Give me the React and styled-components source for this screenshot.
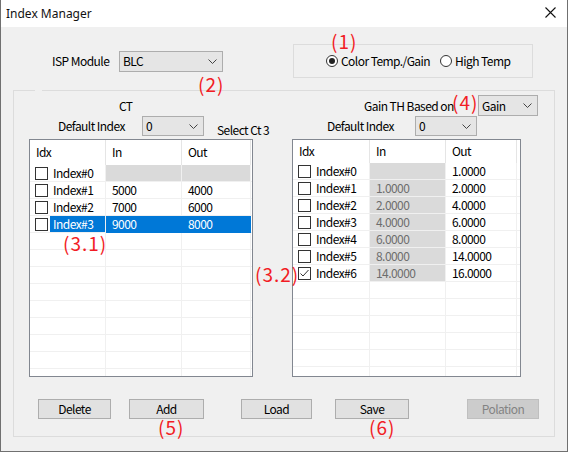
import React from "react";
import styled, { createGlobalStyle } from "styled-components";

const Global = createGlobalStyle`
  html, body { margin: 0; padding: 0; background: #ffffff; }
  * { box-sizing: border-box; }
`;

const UI_FONT = `"Noto Sans CJK TC", "Noto Sans", sans-serif`;

const Window = styled.div`
  position: relative;
  width: 568px;
  height: 452px;
  border: 1px solid #707070;
  border-top: none;
  background: #f0f0f0;
  display: flex;
  flex-direction: column;
  font-family: ${UI_FONT};
  font-size: 12px;
  letter-spacing: -0.55px;
  color: #000;
`;

const TitleBar = styled.div`
  height: 27px;
  flex: none;
  background: #fff;
  display: flex;
  align-items: center;
  padding-left: 5px;
`;

const Title = styled.span`
  font-family: "Noto Sans", sans-serif;
  font-size: 12px;
  letter-spacing: 0;
  color: #111;
  margin-top: -1px;
`;

const CloseIcon = styled.svg`
  margin-left: auto;
  margin-right: 11px;
  margin-top: -3px;
`;

const Body = styled.div`
  flex: 1;
  display: flex;
  flex-direction: column;
`;

const TopRow = styled.div`
  display: flex;
  align-items: center;
  height: 34px;
  margin-top: 17px;
  padding-left: 51px;
`;

const FieldLabel = styled.span`
  width: ${(p) => p.$w}px;
  margin-left: ${(p) => p.$ml || 0}px;
  flex: none;
  white-space: nowrap;
  line-height: 14px;
`;

const ComboBox = styled.div`
  width: ${(p) => p.$w}px;
  height: ${(p) => p.$h}px;
  margin-left: ${(p) => p.$ml || 0}px;
  flex: none;
  background: #e5e5e5;
  border: 1px solid #adadad;
  display: flex;
  align-items: center;
  padding: 0 5px 0 3px;
  line-height: 14px;
`;

const ComboText = styled.span`
  flex: 1;
`;

const Chevron = () => (
  <svg width="9" height="5" viewBox="0 0 9 5">
    <polyline points="0.5,0.5 4.5,4.5 8.5,0.5" fill="none" stroke="#444" strokeWidth="1" />
  </svg>
);

const Combo = ({ value, w, h, ml }) => (
  <ComboBox $w={w} $h={h} $ml={ml}>
    <ComboText>{value}</ComboText>
    <Chevron />
  </ComboBox>
);

const RadioGroup = styled.div`
  margin-left: 70px;
  width: 240px;
  height: 34px;
  border: 1px solid #dcdcdc;
  display: flex;
  align-items: center;
  padding-left: 32px;
  gap: 10px;
`;

const RadioOption = styled.label`
  display: flex;
  align-items: center;
  gap: 3px;
  line-height: 14px;
`;

const RadioCircle = styled.span`
  width: 12px;
  height: 12px;
  border-radius: 50%;
  border: 1px solid #333;
  background: #fff;
  display: flex;
  align-items: center;
  justify-content: center;
  &::after {
    content: "";
    width: 6px;
    height: 6px;
    border-radius: 50%;
    background: ${(p) => (p.$on ? "#222" : "transparent")};
  }
`;

const Group = styled.fieldset`
  margin: 12px 0 0 12px;
  width: 542px;
  height: 347px;
  min-width: 0;
  border: 1px solid #dcdcdc;
  padding: 4px 0 0 15px;
`;

const GroupLegend = styled.legend`
  margin-left: 6px;
  width: 7px;
  height: 0;
  padding: 0;
  font-size: 0;
  line-height: 0;
`;

const Panels = styled.div`
  display: flex;
`;

const Panel = styled.div`
  width: ${(p) => p.$w}px;
  margin-left: ${(p) => p.$ml || 0}px;
  display: flex;
  flex-direction: column;
`;

const PanelRow = styled.div`
  height: ${(p) => p.$h}px;
  display: flex;
  align-items: center;
  padding-left: ${(p) => p.$pl || 0}px;
`;

const SideNote = styled.span`
  margin-left: 13px;
  margin-top: 8px;
  white-space: nowrap;
  line-height: 14px;
`;

const ListView = styled.div`
  margin-top: 3px;
  width: ${(p) => p.$w}px;
  height: 238px;
  border: 1px solid #828790;
  background: #fff;
  overflow: hidden;
  display: grid;
  grid-template-columns: ${(p) => p.$cols};
  grid-template-rows: ${(p) => p.$hh}px;
  grid-auto-rows: 17px;
  align-content: start;
`;

const HeadCell = styled.div`
  display: flex;
  align-items: center;
  padding-left: 6px;
  border-right: 1px solid #e5e5e5;
  line-height: 14px;
  padding-bottom: 1px;
`;

const Cell = styled.div`
  display: flex;
  align-items: center;
  padding-left: 6px;
  border-right: 1px solid #f0f0f0;
  border-bottom: 1px solid #f0f0f0;
  line-height: 14px;
  white-space: nowrap;
  background: ${(p) => (p.$sel ? "#0078d7" : p.$gray ? "#dadada" : "#fff")};
  color: ${(p) => (p.$sel ? "#fff" : p.$gray ? "#6d6d6d" : "#000")};
  ${(p) => (p.$sel ? "border-right-color:#0078d7;border-bottom-color:#0078d7;" : "")}
`;

const IdxCell = styled.div`
  display: flex;
  align-items: stretch;
  padding-left: 5px;
  border-right: 1px solid #f0f0f0;
  border-bottom: 1px solid #f0f0f0;
  line-height: 14px;
  white-space: nowrap;
`;

const CheckWrap = styled.span`
  display: flex;
  align-items: center;
`;

const CheckBox = styled.span`
  width: 13px;
  height: 13px;
  border: 1px solid #333;
  background: #fff;
  display: flex;
  align-items: center;
  justify-content: center;
`;

const IdxText = styled.span`
  flex: 1;
  display: flex;
  align-items: center;
  margin-left: 2px;
  padding-left: 3px;
  background: ${(p) => (p.$sel ? "#0078d7" : "transparent")};
  color: ${(p) => (p.$sel ? "#fff" : "#000")};
`;

const Buttons = styled.div`
  display: flex;
  margin-top: 22px;
`;

const Button = styled.button`
  width: ${(p) => p.$w}px;
  height: 20px;
  margin-left: ${(p) => p.$ml}px;
  padding: 0;
  font-family: ${UI_FONT};
  font-size: 12px;
  letter-spacing: -0.55px;
  line-height: 14px;
  background: ${(p) => (p.disabled ? "#cccccc" : "#e1e1e1")};
  border: 1px solid ${(p) => (p.disabled ? "#bfbfbf" : "#adadad")};
  color: ${(p) => (p.disabled ? "#838383" : "#000")};
`;

const Note = styled.span`
  position: absolute;
  left: ${(p) => p.$x - 1}px;
  top: ${(p) => p.$y}px;
  font-family: "Noto Sans CJK TC", "Noto Sans", sans-serif;
  font-size: 19px;
  line-height: 20px;
  letter-spacing: 1px;
  color: #f21c24;
  white-space: nowrap;
  pointer-events: none;
`;

const Check = ({ on }) => (
  <CheckWrap>
    <CheckBox>
      {on && (
        <svg width="11" height="11" viewBox="0 0 11 11">
          <polyline points="1.5,5.5 4,8 9.5,2" fill="none" stroke="#333" strokeWidth="1" />
        </svg>
      )}
    </CheckBox>
  </CheckWrap>
);

const FILL_ROWS = 13;

const List = ({ w, cols, hh, rows, grayIn, selected, checked }) => {
  const body = [];
  for (let i = 0; i < FILL_ROWS; i++) {
    const r = rows[i];
    if (r) {
      const sel = selected === i;
      const inGray = grayIn || r.rowGray;
      body.push(
        <IdxCell key={`i${i}`}>
          <Check on={checked === i} />
          <IdxText $sel={sel}>{r.idx}</IdxText>
        </IdxCell>,
        <Cell key={`a${i}`} $sel={sel} $gray={!sel && inGray}>{r.inV}</Cell>,
        <Cell key={`b${i}`} $sel={sel} $gray={!sel && r.rowGray}>{r.outV}</Cell>,
        <Cell key={`c${i}`} />
      );
    } else {
      body.push(
        <Cell key={`i${i}`} />,
        <Cell key={`a${i}`} />,
        <Cell key={`b${i}`} />,
        <Cell key={`c${i}`} />
      );
    }
  }
  return (
    <ListView $w={w} $cols={cols} $hh={hh}>
      <HeadCell>Idx</HeadCell>
      <HeadCell>In</HeadCell>
      <HeadCell>Out</HeadCell>
      <HeadCell />
      {body}
    </ListView>
  );
};

const ctRows = [
  { idx: "Index#0", inV: "", outV: "", rowGray: true },
  { idx: "Index#1", inV: "5000", outV: "4000" },
  { idx: "Index#2", inV: "7000", outV: "6000" },
  { idx: "Index#3", inV: "9000", outV: "8000" },
];

const gainRows = [
  { idx: "Index#0", inV: "", outV: "1.0000" },
  { idx: "Index#1", inV: "1.0000", outV: "2.0000" },
  { idx: "Index#2", inV: "2.0000", outV: "4.0000" },
  { idx: "Index#3", inV: "4.0000", outV: "6.0000" },
  { idx: "Index#4", inV: "6.0000", outV: "8.0000" },
  { idx: "Index#5", inV: "8.0000", outV: "14.0000" },
  { idx: "Index#6", inV: "14.0000", outV: "16.0000" },
];

export default function App() {
  return (
    <>
      <Global />
      <Window>
        <TitleBar>
          <Title>Index Manager</Title>
          <CloseIcon width="11" height="11" viewBox="0 0 11 11">
            <path d="M0.5,0.5 L10.5,10.5 M10.5,0.5 L0.5,10.5" stroke="#111" strokeWidth="1.1" fill="none" />
          </CloseIcon>
        </TitleBar>
        <Body>
          <TopRow>
            <FieldLabel $w={67}>ISP Module</FieldLabel>
            <Combo value="BLC" w={104} h={21} />
            <RadioGroup>
              <RadioOption>
                <RadioCircle $on />
                Color Temp./Gain
              </RadioOption>
              <RadioOption>
                <RadioCircle />
                High Temp
              </RadioOption>
            </RadioGroup>
          </TopRow>
          <Group>
            <GroupLegend />
            <Panels>
              <Panel $w={224}>
                <PanelRow $h={21} $pl={90}>CT</PanelRow>
                <PanelRow $h={20} $pl={29}>
                  <FieldLabel $w={84}>Default Index</FieldLabel>
                  <Combo value="0" w={62} h={20} />
                  <SideNote>Select Ct 3</SideNote>
                </PanelRow>
                <List w={224} cols="76px 76px 69px 1fr" hh={25} rows={ctRows} selected={3} />
              </Panel>
              <Panel $w={246} $ml={39}>
                <PanelRow $h={21} $pl={72}>
                  <FieldLabel $w={90}>Gain TH Based on</FieldLabel>
                  <Combo value="Gain" w={60} h={21} ml={24} />
                </PanelRow>
                <PanelRow $h={20} $pl={35}>
                  <FieldLabel $w={88}>Default Index</FieldLabel>
                  <Combo value="0" w={62} h={20} />
                </PanelRow>
                <List w={229} cols="77px 76px 71px 1fr" hh={23} rows={gainRows} grayIn checked={6} />
              </Panel>
            </Panels>
            <Buttons>
              <Button $w={73} $ml={9}>Delete</Button>
              <Button $w={75} $ml={18}>Add</Button>
              <Button $w={71} $ml={37}>Load</Button>
              <Button $w={74} $ml={23}>Save</Button>
              <Button $w={72} $ml={58} disabled>Polation</Button>
            </Buttons>
          </Group>
        </Body>
        <Note $x={331} $y={31}>(1)</Note>
        <Note $x={198} $y={74}>(2)</Note>
        <Note $x={63} $y={233}>(3.1)</Note>
        <Note $x={255} $y={264}>(3.2)</Note>
        <Note $x={452} $y={92}>(4)</Note>
        <Note $x={158} $y={417}>(5)</Note>
        <Note $x={369} $y={417}>(6)</Note>
      </Window>
    </>
  );
}
